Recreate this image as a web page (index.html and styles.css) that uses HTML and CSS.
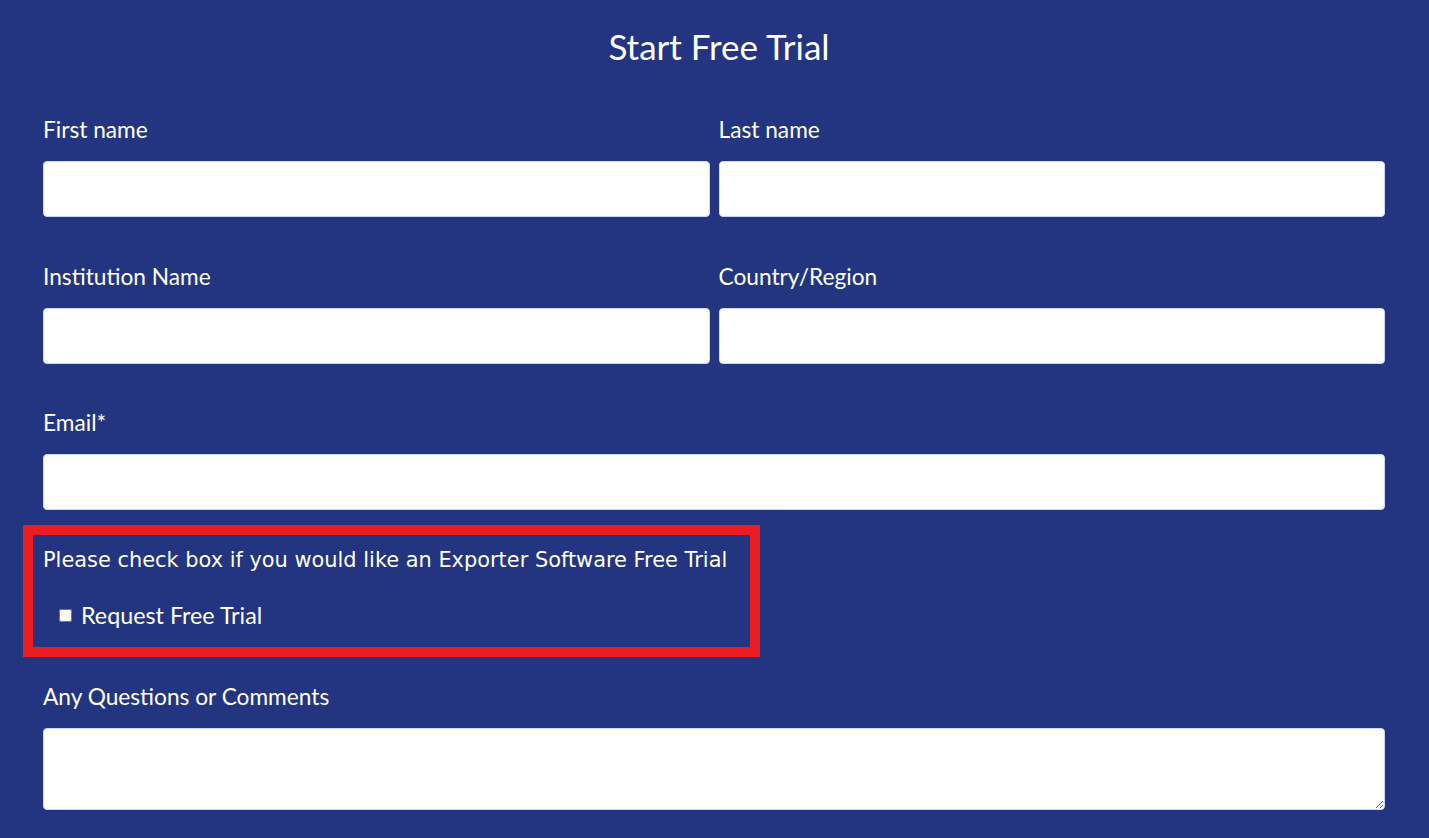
FILE: index.html
```html
<!DOCTYPE html>
<html lang="en">
<head>
<meta charset="utf-8">
<title>Start Free Trial</title>
<link rel="stylesheet" href="styles.css">
</head>
<body>
<form class="form">
  <h1 class="title">Start Free Trial</h1>
  <div class="row two">
    <div class="field">
      <label class="label">First name</label>
      <input class="input" type="text">
    </div>
    <div class="field">
      <label class="label">Last name</label>
      <input class="input" type="text">
    </div>
  </div>
  <div class="row two">
    <div class="field">
      <label class="label">Institution Name</label>
      <input class="input" type="text">
    </div>
    <div class="field">
      <label class="label">Country/Region</label>
      <input class="input" type="text">
    </div>
  </div>
  <div class="row email">
    <div class="field">
      <label class="label">Email*</label>
      <input class="input" type="email">
    </div>
  </div>
  <div class="highlight">
    <p class="check-title">Please check box if you would like an Exporter Software Free Trial</p>
    <label class="check">
      <input class="checkbox" type="checkbox">
      <span>Request Free Trial</span>
    </label>
  </div>
  <div class="row last">
    <div class="field">
      <label class="label">Any Questions or Comments</label>
      <textarea class="textarea"></textarea>
    </div>
  </div>
</form>
</body>
</html>
```

FILE: styles.css
```css
html, body {
  margin: 0;
  padding: 0;
  background: #233580;
}
body {
  font-family: Lato, "Open Sans", sans-serif;
  color: #ffffff;
}
.form {
  padding: 0 44px 0 43px;
  display: flex;
  flex-direction: column;
}
.title {
  margin: 26px 0 0 0;
  padding-left: 10px;
  font-size: 35px;
  font-weight: 400;
  line-height: 40px;
  text-align: center;
}
.row {
  display: grid;
  grid-template-columns: 1fr;
  column-gap: 9px;
  margin-top: 50px;
}
.row.two {
  grid-template-columns: 1fr 1fr;
}
.row + .row {
  margin-top: 46px;
}
.row.email {
  margin-top: 45px;
}
.field {
  display: flex;
  flex-direction: column;
}
.label {
  font-size: 22.7px;
  line-height: 28px;
  margin-bottom: 17px;
}
.input, .textarea {
  box-sizing: border-box;
  height: 56px;
  width: 100%;
  background: #ffffff;
  border: 1px solid #c9d8ef;
  border-radius: 4px;
  margin: 0;
}
.textarea {
  height: 82px;
  resize: vertical;
}
.highlight {
  margin: 15px 0 0 -20px;
  width: 737px;
  box-sizing: border-box;
  border: 10px solid #ec1c24;
  padding: 12px 10px 18px 10px;
}
.check-title {
  margin: 0;
  font-family: "DejaVu Sans", Verdana, sans-serif;
  font-size: 20.9px;
  line-height: 26px;
}
.check {
  display: flex;
  align-items: center;
  margin-top: 28px;
  padding-left: 12px;
  font-size: 23.3px;
  line-height: 28px;
}
.checkbox {
  width: 13px;
  height: 13px;
  margin: 0 9px 0 4px;
}
.row.last {
  margin-top: 26px;
}
```
